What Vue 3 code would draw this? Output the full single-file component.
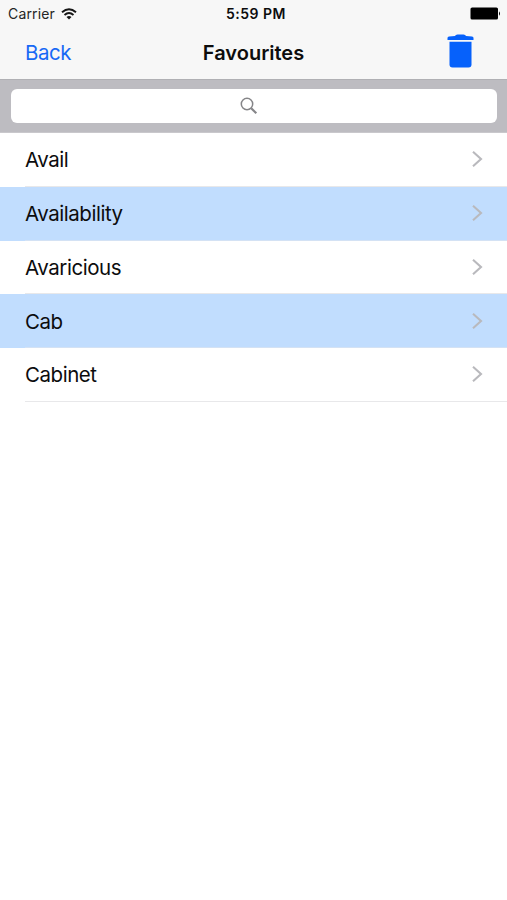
<script setup>
const words = [
  { text: 'Avail', marked: false },
  { text: 'Availability', marked: true },
  { text: 'Avaricious', marked: false },
  { text: 'Cab', marked: true },
  { text: 'Cabinet', marked: false },
]
</script>

<template>
  <main class="screen">
    <header class="top">
      <div class="status">
        <div class="carrier">
          <span>Carrier</span>
          <svg class="wifi" width="16" height="12" viewBox="0 0 16 12" fill="none" stroke="#161616" stroke-width="1.9">
            <path d="M1 4.3Q8-1.7 15 4.3" />
            <path d="M3.5 7Q8 3.2 12.5 7" />
            <path d="M5.5 8.9Q8 6.9 10.5 8.9L8 11.5Z" fill="#161616" stroke="none" />
          </svg>
        </div>
        <time class="clock">5:59 PM</time>
        <svg class="battery" width="31" height="13" viewBox="0 0 31 13">
          <rect x="0.5" y="0.5" width="27.5" height="12" rx="1.6" />
          <path d="M29 4.2Q31 6.5 29 8.8Z" />
        </svg>
      </div>
      <nav class="bar">
        <a class="back">Back</a>
        <h1 class="title">Favourites</h1>
        <svg class="trash" width="27" height="35" viewBox="0 0 27 35" fill="#0661fb">
          <path d="M8 2Q8.5 .4 10.5 .4H16.5Q18.5 .4 19 2L25 2.4Q26.5 2.7 26.5 4V6H.5V4Q.5 2.7 2 2.4Z" />
          <path d="M2.5 7.8h22v22.7q0 3-3 3h-16q-3 0-3-3Z" />
        </svg>
      </nav>
    </header>
    <div class="search">
      <div class="field">
        <svg width="18" height="18" viewBox="0 0 18 18" fill="none" stroke="#858588">
          <circle cx="7" cy="7" r="5.7" stroke-width="1.5" />
          <path d="M11.2 11.2L16.3 16.3" stroke-width="2.2" />
        </svg>
      </div>
    </div>
    <ul class="list">
      <li v-for="w in words" :key="w.text" class="row" :class="{ marked: w.marked }">
        <div class="cell">
          <span>{{ w.text }}</span>
          <svg width="12" height="18" viewBox="0 0 12 18" fill="none" stroke="#b9b9bd" stroke-width="2.1">
            <path d="M2 1.8L10 9L2 16.2" />
          </svg>
        </div>
      </li>
    </ul>
  </main>
</template>

<style>
body {
  margin: 0;
  background: #fff;
}
</style>

<style scoped>
.screen {
  min-height: 900px;
  background: #fff;
  color: #0c0c0d;
  font-family: Inter, "Liberation Sans", sans-serif;
}
.top {
  box-sizing: border-box;
  height: 79px;
  background: #f7f7f7;
}
.status {
  display: grid;
  grid-template-columns: 1fr auto 1fr;
  align-items: center;
  height: 27px;
  padding: 0 6px 0 8px;
  font-size: 14px;
}
.carrier {
  display: flex;
  align-items: center;
  gap: 6px;
  color: #252525;
  letter-spacing: 0.15px;
}
.clock {
  padding-left: 3px;
  font-weight: 600;
  letter-spacing: 0.5px;
}
.battery {
  justify-self: end;
}
.bar {
  display: grid;
  grid-template-columns: 1fr auto 1fr;
  align-items: center;
  height: 50px;
  padding: 0 33px 0 25px;
  font-size: 20.5px;
}
.back {
  padding-top: 1px;
  color: #1769f5;
  letter-spacing: -0.5px;
}
.title {
  margin: 0;
  padding: 1px 0 0 8px;
  font-size: 20px;
  font-weight: 600;
}
.trash {
  justify-self: end;
  margin-bottom: 2px;
}
.search {
  box-sizing: border-box;
  height: 54px;
  padding: 9px 10px 9px 11px;
  background: #bdbcc1;
  border-top: 1px solid #b0b0b4;
  border-bottom: 1px solid #c9c8cc;
}
.field {
  box-sizing: border-box;
  display: flex;
  align-items: center;
  justify-content: center;
  height: 34px;
  padding-right: 10px;
  border-radius: 6px;
  background: #fff;
}
.list {
  margin: 0;
  padding: 0;
  list-style: none;
}
.row {
  height: 53.75px;
  padding-left: 25px;
}
.marked {
  background: #c1ddfe;
}
.cell {
  box-sizing: border-box;
  display: flex;
  align-items: center;
  justify-content: space-between;
  height: 100%;
  padding-right: 24px;
  border-bottom: 1px solid #e8e8ea;
  font-size: 20.5px;
  letter-spacing: -0.46px;
}
.cell span {
  padding-top: 1px;
}
.marked .cell {
  border-bottom-color: #d4e2f4;
}
</style>
